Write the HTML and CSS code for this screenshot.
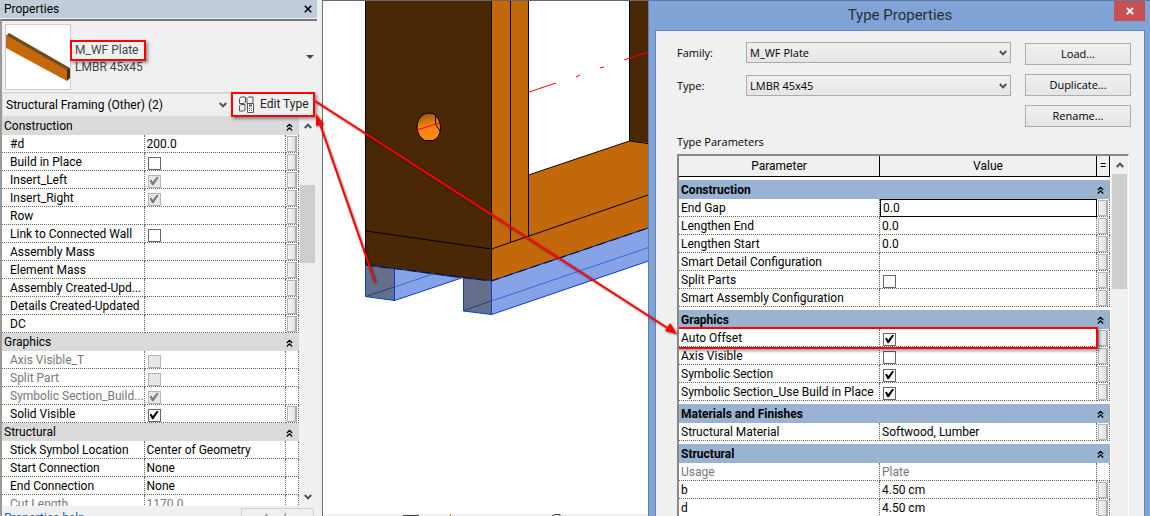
FILE: index.html
```html
<!DOCTYPE html>
<html lang="en">
<head>
<meta charset="utf-8">
<title>Type Properties</title>
<link rel="stylesheet" href="styles.css">
</head>
<body>
<svg class="defs" aria-hidden="true">
  <symbol id="chev-down" viewBox="0 0 8 6"><path d="M.8 1 4 4.4 7.200 1" fill="none" stroke="#505050" stroke-width="2"/></symbol>
  <symbol id="chev-up" viewBox="0 0 8 6"><path d="M.8 5 4 1.600 7.200 5" fill="none" stroke="#505050" stroke-width="2"/></symbol>
  <symbol id="collapse" viewBox="0 0 7 8"><path d="M.8 4 3.500 1.300 6.200 4M.8 7.500 3.500 4.800 6.200 7.500" fill="none" stroke="#000" stroke-width="1.300"/></symbol>
</svg>
<main class="app">
  <section class="palette" aria-label="Properties">
    <header class="palette-title">
      <span>Properties</span>
      <button class="plain" aria-label="Close properties"><svg width="8" height="8" viewBox="0 0 10 10"><path d="m1 1 8 8M9 1 1 9" stroke="#000" stroke-width="2"/></svg></button>
    </header>
    <div class="palette-body">
      <div class="type-picker">
        <svg class="thumb" viewBox="0 0 64 64" aria-hidden="true">
          <path d="M0 11 3 8 64 43 61 46Z" fill="#6e4a1c"/>
          <path d="M0 10 61 45V56L0 23Z" fill="#c4690b"/>
          <path d="m61 45 3-2V53l-3 3Z" fill="#4a2806"/>
        </svg>
        <div class="type-names"><span class="marked mark-name">M_WF Plate</span><span>LMBR 45x45</span></div>
        <button class="plain" aria-label="Change type"><svg width="8" height="4" viewBox="0 0 8 4"><path d="M0 0h8L4 4Z" fill="#444"/></svg></button>
      </div>
      <div class="filter-row">
        <div class="combo flat">
          <select aria-label="Selection filter"><option>Structural Framing (Other) (2)</option></select>
          <svg class="chev"><use href="#chev-down"/></svg>
        </div>
        <button class="plain edit-type marked mark-edit">
          <svg width="17" height="17" viewBox="0 0 17 17" fill="none" stroke="#555"><path d="M1.500 2.500 3 1h4.500v5L6 7.500H1.500ZM9 2.500 10.500 1H15v5l-1 1.500H9ZM1.500 10 3 8.500h4V14l-1 1H1.500Z"/><path d="M9.500 7.500h6v9h-6Z" fill="#fff"/><path d="M11 9.500h3" stroke="#1d62a8" stroke-width="2"/><path d="M11 12.500h1m1 0h1m-3 2h1m1 0h1"/></svg>
          <span>Edit Type</span>
        </button>
      </div>
      <div class="scroll-area">
        <div class="sheet">
        <table class="params instance">
          <colgroup><col class="c-name"><col class="c-value"><col class="c-btn"></colgroup>
          <tbody>
            <tr class="band"><th colspan="3"><div>Construction<svg class="coll"><use href="#collapse"/></svg></div></th></tr>
            <tr><td>#d</td><td>200.0</td><td><button aria-label="Associate #d"></button></td></tr>
            <tr><td><label for="a1">Build in Place</label></td><td><input type="checkbox" id="a1"></td><td><button aria-label="Associate Build in Place"></button></td></tr>
            <tr><td><label for="a2">Insert_Left</label></td><td><input type="checkbox" id="a2" checked disabled></td><td><button aria-label="Associate Insert_Left"></button></td></tr>
            <tr><td><label for="a3">Insert_Right</label></td><td><input type="checkbox" id="a3" checked disabled></td><td><button aria-label="Associate Insert_Right"></button></td></tr>
            <tr><td>Row</td><td></td><td><button aria-label="Associate Row"></button></td></tr>
            <tr><td><label for="a4">Link to Connected Wall</label></td><td><input type="checkbox" id="a4"></td><td><button aria-label="Associate Link to Connected Wall"></button></td></tr>
            <tr><td>Assembly Mass</td><td></td><td><button aria-label="Associate Assembly Mass"></button></td></tr>
            <tr><td>Element Mass</td><td></td><td><button aria-label="Associate Element Mass"></button></td></tr>
            <tr><td>Assembly Created-Upd...</td><td></td><td><button aria-label="Associate Assembly Created-Updated"></button></td></tr>
            <tr><td>Details Created-Updated</td><td></td><td><button aria-label="Associate Details Created-Updated"></button></td></tr>
            <tr><td>DC</td><td></td><td><button aria-label="Associate DC"></button></td></tr>
          </tbody>
          <tbody>
            <tr class="band"><th colspan="3"><div>Graphics<svg class="coll"><use href="#collapse"/></svg></div></th></tr>
            <tr class="off"><td><label for="a5">Axis Visible_T</label></td><td><input type="checkbox" id="a5" disabled></td><td></td></tr>
            <tr class="off"><td><label for="a6">Split Part</label></td><td><input type="checkbox" id="a6" disabled></td><td></td></tr>
            <tr class="off"><td><label for="a7">Symbolic Section_Build...</label></td><td><input type="checkbox" id="a7" checked disabled></td><td></td></tr>
            <tr><td><label for="a8">Solid Visible</label></td><td><input type="checkbox" id="a8" checked></td><td><button aria-label="Associate Solid Visible"></button></td></tr>
          </tbody>
          <tbody>
            <tr class="band"><th colspan="3"><div>Structural<svg class="coll"><use href="#collapse"/></svg></div></th></tr>
            <tr><td>Stick Symbol Location</td><td>Center of Geometry</td><td></td></tr>
            <tr><td>Start Connection</td><td>None</td><td></td></tr>
            <tr><td>End Connection</td><td>None</td><td></td></tr>
            <tr class="off"><td>Cut Length</td><td>1170.0</td><td></td></tr>
          </tbody>
        </table>
        </div>
        <div class="scrollbar"><svg class="chev"><use href="#chev-up"/></svg><div class="track"><div class="thumb-bar low"></div></div><svg class="chev"><use href="#chev-down"/></svg></div>
      </div>
      <footer class="palette-foot"><a href="#help">Properties help</a><button disabled>Apply</button></footer>
    </div>
  </section>

  <section class="view" aria-label="3D view">
    <svg viewBox="323 1 325 515" preserveAspectRatio="xMinYMin slice" role="img" aria-label="Timber frame model">
      <defs><linearGradient id="hole" x1="0" y1="0" x2=".2" y2="1"><stop offset="0" stop-color="#8a4a08"/><stop offset=".5" stop-color="#f08010"/><stop offset="1" stop-color="#ff8c14"/></linearGradient></defs>
      <path fill="#4a2806" d="M366 0H492V281L366 265Z"/>
      <path fill="#c4690b" d="M492 0H529V175L630 141 648 143V228L492 281Z"/>
      <path fill="#4a2806" d="M630 0h18v143l-18-2Z"/>
      <g fill="none" stroke="#000" stroke-width="1"><path d="M365.500 0V265L491.500 281V0M510.500 0V243M528.500 0V236M629.500 0V141M528.500 175 629.500 141 648 143.500M366 231 491.500 249 648 195M491.500 281 648 228"/></g>
      <g stroke="#0a3cc8" stroke-width="1">
        <path fill="#86a3e7" d="M394.500 268.500 461.500 278 394.500 300.500Z"/>
        <path fill="#636f8b" d="M365.500 265 394.500 269V300.500L365.500 296.500Z"/>
        <path fill="#86a3e7" d="M491.500 281 650 227.500V260.500L491.500 314.500Z"/>
        <path fill="#636f8b" d="M463.500 278 491.500 281V314.500L463.500 311Z"/>
        <path fill="none" stroke="#3566d8" d="M394.500 287 433 274M491.500 301 650 247"/>
        <path fill="none" stroke="#243c78" d="M366 296.500 394 287M464 310.500 491 301"/>
      </g>
      <path d="M366 265 491.500 281 648 228" fill="none" stroke="#111" stroke-dasharray="9 5"/>
      <path d="M424 114Q429 112 434 114 440 118 440.500 128 440 138 433 140.500H425Q418 137 417 128 417 118 424 114Z" fill="url(#hole)" stroke="#000"/>
      <path d="M435.500 116V124L440 131" fill="none" stroke="#000"/>
      <path d="m417 130 22-7M529 92l27-9M576 77l4-2M600 68l4-1M624 60l24-8" stroke="#f00" fill="none"/>
      <path d="M323 514h325v2H323Z" fill="#eee"/>
      <path d="M403 515h16v1h-16Z" fill="#444"/><path d="M450 514h1v2h-1Z" fill="#c47a10"/><path d="m552 516 3-1.500h5v1.500" fill="none" stroke="#444"/>
    </svg>
  </section>

  <section class="dialog" role="dialog" aria-label="Type Properties">
    <header class="dialog-title"><h1>Type Properties</h1><button class="close" aria-label="Close dialog"><svg width="8" height="8" viewBox="0 0 8 8"><path d="m.8.800 6.400 6.400M7.200.800.8 7.200" stroke="#fff" stroke-width="1.800"/></svg></button></header>
    <div class="dialog-body">
      <div class="form">
        <div class="fields">
          <label for="family">Family:</label>
          <div class="combo"><select id="family"><option>M_WF Plate</option></select><svg class="chev"><use href="#chev-down"/></svg></div>
          <label for="type">Type:</label>
          <div class="combo"><select id="type"><option>LMBR 45x45</option></select><svg class="chev"><use href="#chev-down"/></svg></div>
        </div>
        <div class="actions"><button>Load...</button><button>Duplicate...</button><button>Rename...</button></div>
      </div>
      <p class="caption">Type Parameters</p>
      <div class="scroll-area sunken">
        <div class="sheet">
        <table class="params type">
          <colgroup><col class="c-name"><col class="c-value"><col class="c-btn"></colgroup>
          <thead><tr><th>Parameter</th><th>Value</th><th>=</th></tr></thead>
          <tbody>
            <tr class="band"><th colspan="3"><div>Construction<svg class="coll"><use href="#collapse"/></svg></div></th></tr>
            <tr><td><label for="gap">End Gap</label></td><td class="editing"><input type="text" id="gap" value="0.0"></td><td><button aria-label="Associate End Gap"></button></td></tr>
            <tr><td>Lengthen End</td><td>0.0</td><td><button aria-label="Associate Lengthen End"></button></td></tr>
            <tr><td>Lengthen Start</td><td>0.0</td><td><button aria-label="Associate Lengthen Start"></button></td></tr>
            <tr><td>Smart Detail Configuration</td><td></td><td><button aria-label="Associate Smart Detail Configuration"></button></td></tr>
            <tr><td><label for="b1">Split Parts</label></td><td><input type="checkbox" id="b1"></td><td><button aria-label="Associate Split Parts"></button></td></tr>
            <tr><td>Smart Assembly Configuration</td><td></td><td><button aria-label="Associate Smart Assembly Configuration"></button></td></tr>
          </tbody>
          <tbody>
            <tr class="band"><th colspan="3"><div>Graphics<svg class="coll"><use href="#collapse"/></svg></div></th></tr>
            <tr class="mark-row"><td><label for="b2">Auto Offset</label><span class="frame"></span></td><td><input type="checkbox" id="b2" checked></td><td><button aria-label="Associate Auto Offset"></button></td></tr>
            <tr><td><label for="b3">Axis Visible</label></td><td><input type="checkbox" id="b3"></td><td><button aria-label="Associate Axis Visible"></button></td></tr>
            <tr><td><label for="b4">Symbolic Section</label></td><td><input type="checkbox" id="b4" checked></td><td><button aria-label="Associate Symbolic Section"></button></td></tr>
            <tr><td><label for="b5">Symbolic Section_Use Build in Place</label></td><td><input type="checkbox" id="b5" checked></td><td><button aria-label="Associate Symbolic Section_Use Build in Place"></button></td></tr>
          </tbody>
          <tbody>
            <tr class="band"><th colspan="3"><div>Materials and Finishes<svg class="coll"><use href="#collapse"/></svg></div></th></tr>
            <tr><td>Structural Material</td><td>Softwood, Lumber</td><td><button aria-label="Associate Structural Material"></button></td></tr>
          </tbody>
          <tbody>
            <tr class="band"><th colspan="3"><div>Structural<svg class="coll"><use href="#collapse"/></svg></div></th></tr>
            <tr class="off"><td>Usage</td><td>Plate</td><td></td></tr>
            <tr><td>b</td><td>4.50 cm</td><td><button aria-label="Associate b"></button></td></tr>
            <tr><td>d</td><td>4.50 cm</td><td><button aria-label="Associate d"></button></td></tr>
          </tbody>
        </table>
        </div>
        <div class="scrollbar"><svg class="chev"><use href="#chev-up"/></svg><div class="track"><div class="thumb-bar"></div></div></div>
      </div>
    </div>
  </section>

  <svg class="arrows" viewBox="0 0 1150 516" preserveAspectRatio="none" aria-hidden="true">
    <path d="m315 101 354 228M375 282 320 124" stroke="#f00" stroke-width="2" fill="none"/>
    <path d="m677 334-12-3 5-8ZM316 114l8 10-8 2Z" fill="#f00"/>
  </svg>
</main>
</body>
</html>
```

FILE: styles.css
```css
* { box-sizing: border-box; }
body { margin: 0; font: 12px/18px Roboto, "Open Sans", sans-serif; color: #000; }
button, select, input { font: inherit; color: inherit; margin: 0; }
.defs { position: absolute; width: 0; height: 0; }

.app { position: relative; display: grid; grid-template-columns: 323fr 325fr 502fr; height: 100vh; overflow: hidden; background: #f0f0f0; }
.app > section { min-width: 0; min-height: 0; overflow: hidden; }
.plain { border: 0; padding: 0; background: none; display: flex; align-items: center; }
.chev { width: 8px; height: 6px; flex: none; }

/* marker frames */
.marked, .mark-row { position: relative; }
.marked::after, .frame { content: ""; position: absolute; border: 2px solid #f00; box-shadow: 2px 2px 3px #0006; pointer-events: none; }
.mark-name::after { inset: 0 -8px -1px -5px; }
.mark-edit::after { inset: -1px 1px 0 0; }
.mark-row .frame { inset: -2px 12px -2px -2px; }

/* properties palette */
.palette { display: flex; flex-direction: column; background: #f0f0f0; border-right: 1px solid #707070; padding-right: 5px; }
.palette-title { display: flex; justify-content: space-between; align-items: center; height: 18px; flex: none; padding: 0 5px 0 4px; background: #bfcddb; }
.palette-body { display: flex; flex-direction: column; flex: 1; min-height: 0; margin-top: 1px; border-top: 2px solid #777; border-left: 2px solid #999; padding-right: 1px; }
.type-picker { display: flex; align-items: center; flex: none; height: 72px; padding: 0 2px 0 3px; border-bottom: 1px solid #d5d5d5; color: #444; }
.thumb { width: 66px; height: 66px; flex: none; background: #fff; border: 1px solid #ccc; }
.type-names { display: flex; flex-direction: column; flex: 1; padding-left: 4px; line-height: 20px; align-items: flex-start; }
.type-names span:last-child { line-height: 14px; }
.filter-row { display: flex; flex: none; height: 24px; }
.filter-row .combo { flex: 1; }
.edit-type { width: 85px; gap: 5px; padding: 0 0 2px 7px; color: #222; white-space: nowrap; }

.combo { position: relative; display: flex; align-items: center; min-width: 0; }
.combo select { appearance: none; width: 100%; height: 21px; border: 1px solid #acacac; border-radius: 0; padding: 0 20px 0 3px; background: linear-gradient(#f0f0f0, #e5e5e5); }
.combo .chev { position: absolute; right: 4px; }
.combo.flat select { height: 24px; border-color: #ddd; background: #efefef; }

/* parameter grids */
.scroll-area { display: flex; flex: 1; min-height: 0; overflow: hidden; align-items: stretch; }
.sheet { flex: 1; min-width: 0; }
.params { width: 100%; table-layout: fixed; border-collapse: separate; border-spacing: 0; background: #fff; }
.c-btn { width: 13px; }
.instance .c-name { width: 48%; }
.type .c-name { width: 201px; }
.params tr { height: 18px; }
.params td, .params th { padding: 0; height: 18px; white-space: nowrap; overflow: hidden; }
.params td { padding-top: 1px; line-height: 16px; border-bottom: 1px dotted #666; border-right: 1px dotted #666; }
.instance td:first-child { padding-left: 8px; }
.type td:first-child { padding-left: 2px; }
.params td:nth-child(2) { padding-left: 2px; }
.params td button { display: block; width: 10px; height: 16px; margin-left: 1px; padding: 0; border: 1px solid #b5b5b5; border-right: 2px solid #aaa; background: linear-gradient(90deg, #f4f4f4, #e0e0e0); }
.off { color: #777; }
.band th { text-align: left; background: #dadada; font-weight: 400; line-height: 17px; }
.params .band th { padding-top: 1px; }
.band div { display: flex; justify-content: space-between; align-items: center; padding: 0 6px 0 2px; }
.coll { width: 7px; height: 8px; }
.type .band th { height: 22px; border-top: 3px solid #fff; background: #9ab3d1; font-weight: 700; line-height: 18px; }
.params thead th { height: 21px; background: #f0f0f0; font-weight: 400; border-right: 1px solid #000; border-bottom: 1px solid #000; }
.params .editing { border: 1px solid #000; padding: 0 0 0 1px; }
.editing input { display: block; width: 100%; height: 16px; border: 0; padding: 0; background: none; outline: 0; }

input[type="checkbox"] { appearance: none; display: block; width: 13px; height: 13px; margin: 2px 0 0 1px; border: 1px solid #666; background: #fff; }
input[type="checkbox"]:checked::after { content: ""; display: block; width: 9px; height: 9px; margin: 1px; background: #000; clip-path: polygon(0 42%, 20% 36%, 36% 60%, 84% 0, 100% 12%, 42% 96%, 28% 96%); }
input[type="checkbox"]:disabled { border-color: #b5b5b5; background: #e6e6e6; }
input[type="checkbox"]:disabled::after { background: #777; }

.scrollbar { display: flex; flex-direction: column; align-items: center; flex: none; width: 17px; background: #f0f0f0; padding: 6px 0; }
.track { flex: 1; width: 15px; padding-top: 6px; }
.thumb-bar { height: 115px; background: #cdcdcd; }
.thumb-bar.low { height: 78px; margin-top: 50px; }

.palette-foot { display: flex; justify-content: space-between; align-items: flex-start; height: 10px; flex: none; padding: 2px 2px 0 2px; overflow: hidden; }
.palette-foot a { color: #1565c0; text-decoration: none; padding-top: 1px; }
.palette-foot button { width: 73px; height: 22px; flex: none; border: 1px solid #d0d0d0; background: #efefef; color: #888; }

/* model view */
.view { background: #fff; border-top: 1px solid #666; }
.view svg { display: block; width: 100%; height: 100%; }
.arrows { position: absolute; inset: 0; width: 100%; height: 100%; pointer-events: none; filter: drop-shadow(1px 1px 1px #0008); }

/* type properties dialog */
.dialog { display: flex; flex-direction: column; background: #7fa3d4; border-top: 1px solid #5b7ba8; border-left: 1px solid #5b7ba8; padding: 0 5px 0 6px; }
.dialog-title { position: relative; display: flex; justify-content: center; flex: none; height: 29px; }
.dialog-title h1 { margin: 0; font-size: 15px; line-height: 29px; font-weight: 400; color: #2a2f38; }
.close { position: absolute; right: 0; top: 0; width: 31px; height: 20px; padding: 0; border: 0; background: #c75050; display: flex; align-items: center; justify-content: center; }
.dialog-body { display: flex; flex-direction: column; flex: 1; min-height: 0; padding: 11px 13px 0 21px; background: #f0f0f0; border: 1px solid #6488b8; border-bottom: 0; font: 11px/18px "Open Sans", "Noto Sans", sans-serif; }
.form { display: flex; gap: 14px; }
.fields { flex: 1; display: grid; grid-template-columns: 69px 1fr; grid-auto-rows: 21px; row-gap: 12px; align-content: start; align-items: center; }
.actions { display: flex; flex-direction: column; gap: 9px; width: 106px; padding-top: 1px; }
.actions button { height: 22px; padding: 0; border: 1px solid #acacac; background: linear-gradient(#f0f0f0, #e5e5e5); }
.caption { margin: 6px 0 3px; line-height: 18px; }
.sunken { margin-right: 2px; border-top: 2px solid #888; border-left: 2px solid #888; border-right: 1px solid #fff; background: #fff; font: 12px/18px Roboto, "Open Sans", sans-serif; }
.sunken .scrollbar { margin-left: 1px; }
```
